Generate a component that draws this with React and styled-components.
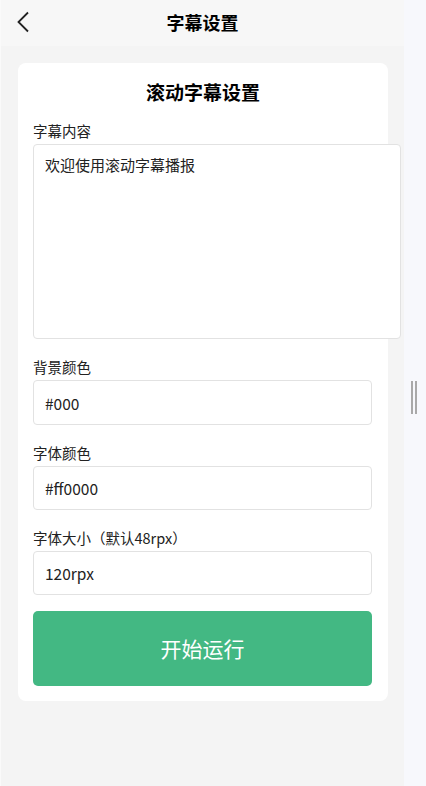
import React, { useState } from "react";
import styled, { createGlobalStyle } from "styled-components";

const GlobalStyle = createGlobalStyle`
  html, body {
    margin: 0;
    padding: 0;
    background: #f7f8fc;
  }
  body {
    font-family: "Noto Sans CJK SC", "Noto Sans", sans-serif;
    color: #111;
  }
  * {
    box-sizing: border-box;
  }
`;

const Screen = styled.div`
  display: flex;
  width: 426px;
  height: 786px;
  overflow: hidden;
  background: #f7f8fc;
`;

const Phone = styled.div`
  width: 404px;
  height: 786px;
  display: flex;
  flex-direction: column;
  border-left: 1px solid #fafafa;
  background: #f4f4f4;
`;

const NavBar = styled.div`
  height: 46px;
  flex-shrink: 0;
  position: relative;
  display: flex;
  align-items: center;
  justify-content: center;
  padding-bottom: 2px;
  background: #f7f7f7;
`;

const BackButton = styled.button`
  position: absolute;
  left: 9px;
  top: 9px;
  width: 26px;
  height: 26px;
  padding: 0;
  border: none;
  background: transparent;
  display: flex;
  align-items: center;
  justify-content: center;
`;

const NavTitle = styled.h1`
  margin: 0;
  font-size: 18px;
  font-weight: 700;
  line-height: 24px;
  color: #000;
`;

const Body = styled.div`
  flex: 1;
  padding: 17px 15px 0 17px;
`;

const Card = styled.div`
  width: 370px;
  background: #fff;
  border-radius: 8px;
  padding: 16px 15px 15px;
  display: flex;
  flex-direction: column;
`;

const CardTitle = styled.h2`
  margin: 0 0 16px;
  font-size: 19px;
  font-weight: 700;
  line-height: 26px;
  text-align: center;
  color: #000;
`;

const Field = styled.div`
  display: flex;
  flex-direction: column;
  margin-top: ${(p) => p.$gap || 0}px;
`;

const Label = styled.label`
  font-size: 14.5px;
  line-height: 20px;
  color: #222;
  margin-bottom: 3px;
`;

const TextArea = styled.textarea`
  width: 368px;
  height: 195px;
  border: 1px solid #e2e2e2;
  border-radius: 4px;
  padding: 10px 11px;
  font-family: inherit;
  font-size: 15px;
  line-height: 20px;
  color: #222;
  resize: none;
  outline: none;
  background: #fff;
`;

const Input = styled.input`
  width: 339px;
  height: ${(p) => p.$h || 45}px;
  border: 1px solid #e2e2e2;
  border-radius: 4px;
  padding: 0 11px;
  font-family: inherit;
  font-size: 15.5px;
  color: #222;
  outline: none;
  background: #fff;
`;

const StartButton = styled.button`
  margin-top: 16px;
  width: 339px;
  height: 75px;
  border: none;
  border-radius: 5px;
  background: #43b883;
  color: #fff;
  font-family: inherit;
  font-size: 21px;
  padding-bottom: 3px;
  cursor: pointer;
`;

const Side = styled.div`
  flex: 1;
  display: flex;
  justify-content: center;
  padding-top: 381px;
  padding-right: 2px;
`;

const Grip = styled.div`
  width: 6px;
  height: 33px;
  border-left: 2px solid #a9a9a9;
  border-right: 2px solid #a9a9a9;
`;

const BackIcon = () => (
  <svg width="14" height="22" viewBox="0 0 14 22" fill="none">
    <path d="M12 1.5L2.5 11l9.5 9.5" stroke="#222" strokeWidth="1.8" />
  </svg>
);

export default function App() {
  const [content, setContent] = useState("欢迎使用滚动字幕播报");
  const [bg, setBg] = useState("#000");
  const [color, setColor] = useState("#ff0000");
  const [size, setSize] = useState("120rpx");

  return (
    <Screen>
      <GlobalStyle />
      <Phone>
        <NavBar>
          <BackButton aria-label="返回">
            <BackIcon />
          </BackButton>
          <NavTitle>字幕设置</NavTitle>
        </NavBar>
        <Body>
          <Card>
            <CardTitle>滚动字幕设置</CardTitle>
            <Field>
              <Label>字幕内容</Label>
              <TextArea value={content} onChange={(e) => setContent(e.target.value)} />
            </Field>
            <Field $gap={18}>
              <Label>背景颜色</Label>
              <Input value={bg} onChange={(e) => setBg(e.target.value)} />
            </Field>
            <Field $gap={18}>
              <Label>字体颜色</Label>
              <Input $h={44} value={color} onChange={(e) => setColor(e.target.value)} />
            </Field>
            <Field $gap={18}>
              <Label>字体大小（默认48rpx）</Label>
              <Input $h={44} value={size} onChange={(e) => setSize(e.target.value)} />
            </Field>
            <StartButton>开始运行</StartButton>
          </Card>
        </Body>
      </Phone>
      <Side>
        <Grip />
      </Side>
    </Screen>
  );
}
